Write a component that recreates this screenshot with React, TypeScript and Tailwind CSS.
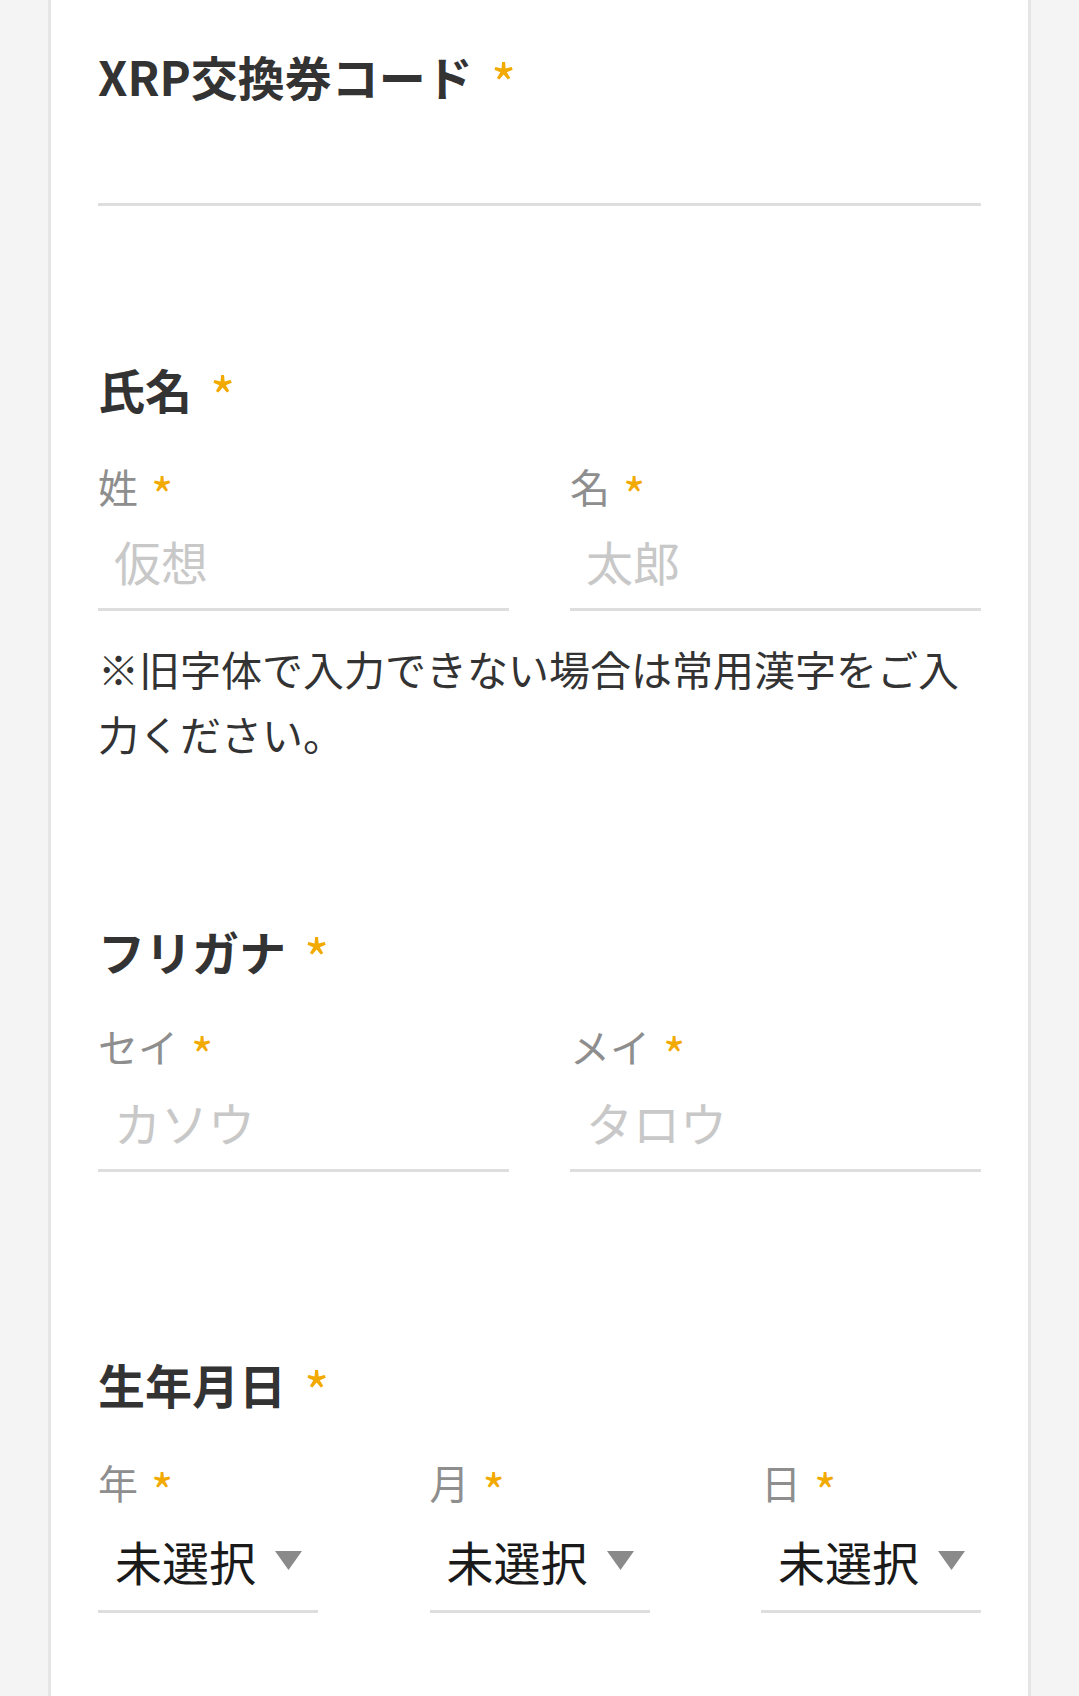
import React from "react";

function Star({ big }: { big?: boolean }) {
  return big ? (
    <span className="ml-[18px] mt-[3px] text-[54px] leading-none font-normal text-[#f2a900]">*</span>
  ) : (
    <span className="ml-[13px] mt-[3px] text-[48px] leading-none text-[#f2a900]">*</span>
  );
}

function Heading({ children }: { children: React.ReactNode }) {
  return (
    <h2 className="flex items-start h-[47px] text-[47px] leading-[47px] font-bold text-[#333333]">
      <span>{children}</span>
      <Star big />
    </h2>
  );
}

function SubLabel({ children }: { children: React.ReactNode }) {
  return (
    <div className="flex items-start h-[40px] text-[40px] leading-[40px] text-[#8e8e8e]">
      <span>{children}</span>
      <Star />
    </div>
  );
}

function TextField({ label, placeholder, tall }: { label: string; placeholder: string; tall?: boolean }) {
  return (
    <div className="flex flex-col">
      <SubLabel>{label}</SubLabel>
      <input
        type="text"
        placeholder={placeholder}
        className={
          tall
            ? "block w-full h-[106px] pt-[7px] pl-[16px] text-[47px] leading-[47px] text-[#222222] bg-transparent border-b-[3px] border-[#dedede] outline-none placeholder:text-[#c8c8c8]"
            : "block w-full h-[105px] pt-[7px] pl-[16px] text-[47px] leading-[47px] text-[#222222] bg-transparent border-b-[3px] border-[#dedede] outline-none placeholder:text-[#c8c8c8]"
        }
      />
    </div>
  );
}

function SelectField({ label }: { label: string }) {
  return (
    <div className="flex flex-col w-[220px]">
      <SubLabel>{label}</SubLabel>
      <div className="flex items-center h-[111px] pt-[8px] pl-[17px] border-b-[3px] border-[#dedede]">
        <span className="text-[47px] leading-[47px] text-[#1a1a1a]">未選択</span>
        <svg width="27" height="19" viewBox="0 0 27 19" className="ml-[19px]">
          <polygon points="0,0 27,0 13.5,19" fill="#8a8a8a" />
        </svg>
      </div>
    </div>
  );
}

export default function App() {
  return (
    <div className="min-h-[1696px] bg-[#f4f4f4] px-[48px] flex font-['Noto_Sans_CJK_JP','Noto_Sans',sans-serif]">
      <div className="flex-1 bg-white border-x-[3px] border-[#e5e5e5] px-[47px] pt-[52px]">
        {/* XRP code */}
        <section>
          <Heading>XRP交換券コード</Heading>
          <input
            type="text"
            className="block w-full h-[107px] text-[47px] leading-[47px] bg-transparent border-b-[3px] border-[#dedede] outline-none"
          />
        </section>

        {/* Name */}
        <section className="mt-[159px]">
          <Heading>氏名</Heading>
          <div className="mt-[54px] grid grid-cols-2 gap-x-[61px]">
            <TextField label="姓" placeholder="仮想" />
            <TextField label="名" placeholder="太郎" />
          </div>
          <p className="mt-[25px] text-[41px] leading-[65px] text-[#333333]">
            ※旧字体で入力できない場合は常用漢字をご入力ください。
          </p>
        </section>

        {/* Furigana */}
        <section className="mt-[161px]">
          <Heading>フリガナ</Heading>
          <div className="mt-[52px] grid grid-cols-2 gap-x-[61px]">
            <TextField label="セイ" placeholder="カソウ" tall />
            <TextField label="メイ" placeholder="タロウ" tall />
          </div>
        </section>

        {/* Birthday */}
        <section className="mt-[188px]">
          <Heading>生年月日</Heading>
          <div className="mt-[55px] flex justify-between">
            <SelectField label="年" />
            <SelectField label="月" />
            <SelectField label="日" />
          </div>
        </section>
      </div>
    </div>
  );
}
